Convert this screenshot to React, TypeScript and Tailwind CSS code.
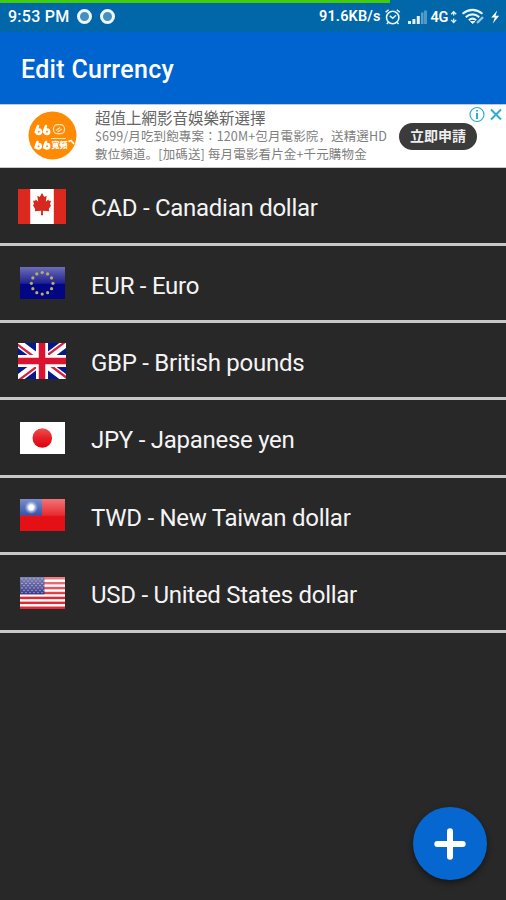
import type { ReactNode } from 'react';

function Canada() {
  return (
    <svg className="relative top-px" width="48" height="35" viewBox="0 0 48 36" preserveAspectRatio="none">
      <rect width="48" height="36" fill="#dc281e" />
      <rect x="12.2" width="23.6" height="36" fill="#fff" />
      <path
        transform="translate(24 17)"
        fill="#d5281e"
        d="M0-13 L2.3-8.8 4.7-10 3.8-3.9 6.3-6.3 6.8-4.8 9-5 8 -1.7 9 0 6.8 3.6 7.2 6 .9 5.4 1 10 -1 10 -.9 5.4 -7.2 6 -6.8 3.6 -9 0 -8-1.7 -9-5 -6.8-4.8 -6.3-6.3 -3.8-3.9 -4.7-10 -2.3-8.8Z"
      />
    </svg>
  );
}

function Gloss({ id }: { id: string }) {
  return (
    <>
      <defs>
        <linearGradient id={id} x1="0" y1="0" x2="0" y2="1">
          <stop offset="0" stopColor="#fff" stopOpacity=".42" />
          <stop offset=".5" stopColor="#fff" stopOpacity=".12" />
          <stop offset=".55" stopColor="#fff" stopOpacity="0" />
        </linearGradient>
      </defs>
      <rect width="45" height="32" fill={`url(#${id})`} />
    </>
  );
}

const dots = Array.from({ length: 12 }, (_, i) => (i * Math.PI) / 6);

function Europe() {
  return (
    <svg width="45" height="32" viewBox="0 0 45 32">
      <rect width="45" height="32" fill="#020584" />
      <Gloss id="eu" />
      {dots.map((a) => (
        <circle key={a} cx={22.2 + 10.8 * Math.sin(a)} cy={16.3 - 10.8 * Math.cos(a)} r="1.6" fill="#b9ad69" />
      ))}
    </svg>
  );
}

function Britain() {
  return (
    <svg className="relative top-px" width="48" height="36" viewBox="0 0 48 36">
      <rect width="48" height="36" fill="#06198c" />
      <path d="M0 0 48 36M48 0 0 36" stroke="#fff" strokeWidth="8" />
      <path d="M-1 1 23 19M25 17 49 35M47 -1 23 17M25 19 1 37" stroke="#d8203c" strokeWidth="2.2" />
      <path d="M24 0V36M0 18H48" stroke="#fff" strokeWidth="12" />
      <path d="M24 0V36M0 18H48" stroke="#db1230" strokeWidth="6.5" />
    </svg>
  );
}

function Japan() {
  return (
    <svg width="45" height="32" viewBox="0 0 45 32">
      <defs>
        <linearGradient id="sun" x1="0" y1="0" x2="0" y2="1">
          <stop offset="0" stopColor="#ef5050" />
          <stop offset=".5" stopColor="#e52026" />
          <stop offset="1" stopColor="#df000c" />
        </linearGradient>
      </defs>
      <rect width="45" height="32" fill="#fff" />
      <circle cx="22.3" cy="16" r="9.8" fill="url(#sun)" />
    </svg>
  );
}

function Taiwan() {
  return (
    <svg width="45" height="32" viewBox="0 0 45 32">
      <defs>
        <radialGradient id="glow">
          <stop offset=".35" stopColor="#fff" />
          <stop offset="1" stopColor="#a9bdf0" stopOpacity="0" />
        </radialGradient>
      </defs>
      <rect width="45" height="32" fill="#e51016" />
      <rect width="22" height="16.5" fill="#1b3da0" />
      <Gloss id="tw" />
      <circle cx="11.2" cy="8.4" r="6.8" fill="url(#glow)" />
    </svg>
  );
}

function America() {
  return (
    <svg width="45" height="32" viewBox="0 0 45 32">
      <rect width="45" height="32" fill="#fff" />
      {[0, 1, 2, 3, 4, 5, 6].map((i) => (
        <rect key={i} y={i * 4.92} width="45" height="2.46" fill="#e22731" />
      ))}
      <rect width="24.5" height="17.3" fill="#27287c" />
      {[0, 1, 2, 3, 4, 5, 6].map((r) =>
        [0, 1, 2, 3, 4, 5].map((c) => (
          <circle key={`${r}-${c}`} cx={2 + c * 4 + (r % 2) * 2} cy={1.8 + r * 2.3} r=".65" fill="#b7b8dd" />
        )),
      )}
      <Gloss id="us" />
    </svg>
  );
}

function Row({ flag, label, h }: { flag: ReactNode; label: string; h: string }) {
  return (
    <li className={`flex items-center border-b-[3px] border-[#c8c8c8] ${h}`}>
      <div className="flex w-[84px] shrink-0 justify-center">{flag}</div>
      <span className="ml-[7px] pt-[5px] text-[24px] leading-8 tracking-[-0.27px] whitespace-nowrap text-[#f4f4f4]">{label}</span>
    </li>
  );
}

function StatusBar() {
  return (
    <div className="flex h-8 flex-col bg-[#0167a9] text-white">
      <div className="h-[3px] w-[390px] shrink-0 bg-[#43cc0b]" />
      <div className="flex h-[27px] items-center pl-2 text-[16px] font-medium">
        <span className="w-[69px] whitespace-nowrap tracking-[0.25px]">9:53 PM</span>
        <span className="h-[15px] w-[15px] rounded-full border-[3.5px] border-[#eef7fc] bg-[#4590bd]" />
        <span className="ml-[8px] h-[15px] w-[15px] rounded-full border-[3.5px] border-[#eef7fc] bg-[#4590bd]" />
        <span className="ml-[204px] w-[66px] whitespace-nowrap text-[14.5px] font-semibold tracking-[0.15px]">91.6KB/s</span>
        <svg width="121" height="20" viewBox="385 6 121 20" fill="none" stroke="#e5f3fa">
          <circle cx="392.7" cy="16.5" r="6.2" strokeWidth="1.6" />
          <path d="M389.8 14.8 392.8 17.3 396 14.3M385.6 11.3 388.6 8.7M396.8 8.7 399.8 11.3M388.4 21.3 386.8 23M397 21.3 398.6 23" strokeWidth="1.5" />
          <g stroke="none" fill="#e5f3fa">
            <rect x="408" y="20" width="3" height="3" />
            <rect x="412.4" y="18" width="3" height="5" />
            <rect x="416.8" y="15" width="3" height="8" />
            <rect x="421" y="11.5" width="2.5" height="11.5" opacity=".4" />
            <rect x="424" y="9.5" width="3" height="13.5" opacity=".35" />
          </g>
          <text x="430.5" y="21" fill="#fff" stroke="none" fontSize="14.5" fontWeight="600" textLength="18">4G</text>
          <path d="M451.2 13.3 453.7 10.7 456.2 13.3M453.7 11V14.5M453.7 17.5V21M451.2 18.9 453.7 21.5 456.2 18.9" strokeWidth="1.3" />
          <path d="M462.5 12.8Q472.5 5 482.5 12.8M465.7 16.1Q472.5 10.6 479.3 16.1M468.8 19.2Q472.5 16.1 476.2 19.2" strokeWidth="2" />
          <path d="M470.5 20.5 472.5 22.5 475 20.5Z" fill="#e5f3fa" />
          <path d="M477 22 483 16.2" strokeWidth="2.3" stroke="#9bc5dc" />
          <path d="M497.2 9.5 491.2 16.5H494.8L492.8 22.5 499.2 14.7H495.5Z" fill="#fff" stroke="none" />
        </svg>
      </div>
    </div>
  );
}

function Ad() {
  return (
    <div className="relative flex h-[64px] border-y border-[#c7c7c7] bg-white font-['Noto_Sans_CJK_JP',sans-serif] text-[#808080]">
      <svg className="mt-[6px] ml-[28px] shrink-0" width="49" height="49" viewBox="0 0 49 49">
        <circle cx="24.5" cy="24.5" r="24" fill="#ff8b05" />
        <g fill="none" stroke="#fff" strokeWidth="2.5" strokeLinecap="round">
          <path d="M10 15 7.7 21M18 15 15.7 21M9.5 31 7.5 36.5M18 31 16 36.5" />
          <circle cx="10.7" cy="20.7" r="2.2" />
          <circle cx="19" cy="20.7" r="2.2" />
          <circle cx="10.5" cy="35.2" r="2.2" />
          <circle cx="19" cy="35.2" r="2.2" />
        </g>
        <g fill="none" stroke="#ffe4bf" strokeWidth="1.2">
          <rect x="25.5" y="13.7" width="11" height="9" rx="4" />
          <path d="M28 19.5 32 16.5M29.5 21 34 18M23 27.5H38" />
        </g>
        <text x="23.5" y="36.8" fontSize="8" fontWeight="900" fill="#fff" textLength="16">寬頻</text>
        <path d="M40.5 30.5 43 29.5 46 33" fill="none" stroke="#fff" strokeWidth="1.8" />
      </svg>
      <div className="ml-[18px] flex w-[304px] flex-col pt-[3px] whitespace-nowrap">
        <span className="text-[15.5px] leading-[19px] text-[#666]">超值上網影音娛樂新選擇</span>
        <span className="text-[12.5px] leading-[18px] tracking-[0.13px]">$699/月吃到飽專案：120M+包月電影院，送精選HD</span>
        <span className="text-[12.5px] leading-[17px] tracking-[0.15px]">數位頻道。[加碼送] 每月電影看片金+千元購物金</span>
      </div>
      <div className="mt-[18px] flex h-[27px] w-[78px] items-center justify-center rounded-full bg-[#3b3b3b] pb-[2px] text-[14px] font-bold text-[#eee]">立即申請</div>
      <svg className="absolute top-[1px] right-0" width="38" height="18" viewBox="468 106 38 18" fill="none" stroke="#2caed0">
        <circle cx="477" cy="114.5" r="7" strokeWidth="1.2" />
        <path d="M477 113V119M477 110V111.6" strokeWidth="2" />
        <path d="M491 109.5 501 119.5M501 109.5 491 119.5" strokeWidth="2" />
      </svg>
    </div>
  );
}

export default function App() {
  return (
    <div className="relative flex h-[900px] w-[506px] flex-col overflow-hidden bg-[#282828] font-[Roboto,sans-serif]">
      <StatusBar />
      <header className="flex h-[72px] items-center bg-[#0064d0] pt-[3px] pl-[21px] text-[25px] font-medium tracking-[0.3px] text-white">
        <h1>Edit Currency</h1>
      </header>
      <Ad />
      <ul className="flex flex-col">
        <Row flag={<Canada />} label="CAD - Canadian dollar" h="h-[78px]" />
        <Row flag={<Europe />} label="EUR - Euro" h="h-[77px]" />
        <Row flag={<Britain />} label="GBP - British pounds" h="h-[77px]" />
        <Row flag={<Japan />} label="JPY - Japanese yen" h="h-[78px]" />
        <Row flag={<Taiwan />} label="TWD - New Taiwan dollar" h="h-[77px]" />
        <Row flag={<America />} label="USD - United States dollar" h="h-[78px]" />
      </ul>
      <button aria-label="Add currency" className="absolute top-[807px] left-[413px] flex h-[73px] w-[74px] items-center justify-center rounded-full bg-[#0667d0] shadow-[0_3px_6px_rgba(0,0,0,0.45)]">
        <svg width="32" height="32" viewBox="0 0 32 32" stroke="#fff" strokeWidth="6" strokeLinecap="round">
          <path d="M16 3.3V28.7M3.3 16H28.7" />
        </svg>
      </button>
    </div>
  );
}
